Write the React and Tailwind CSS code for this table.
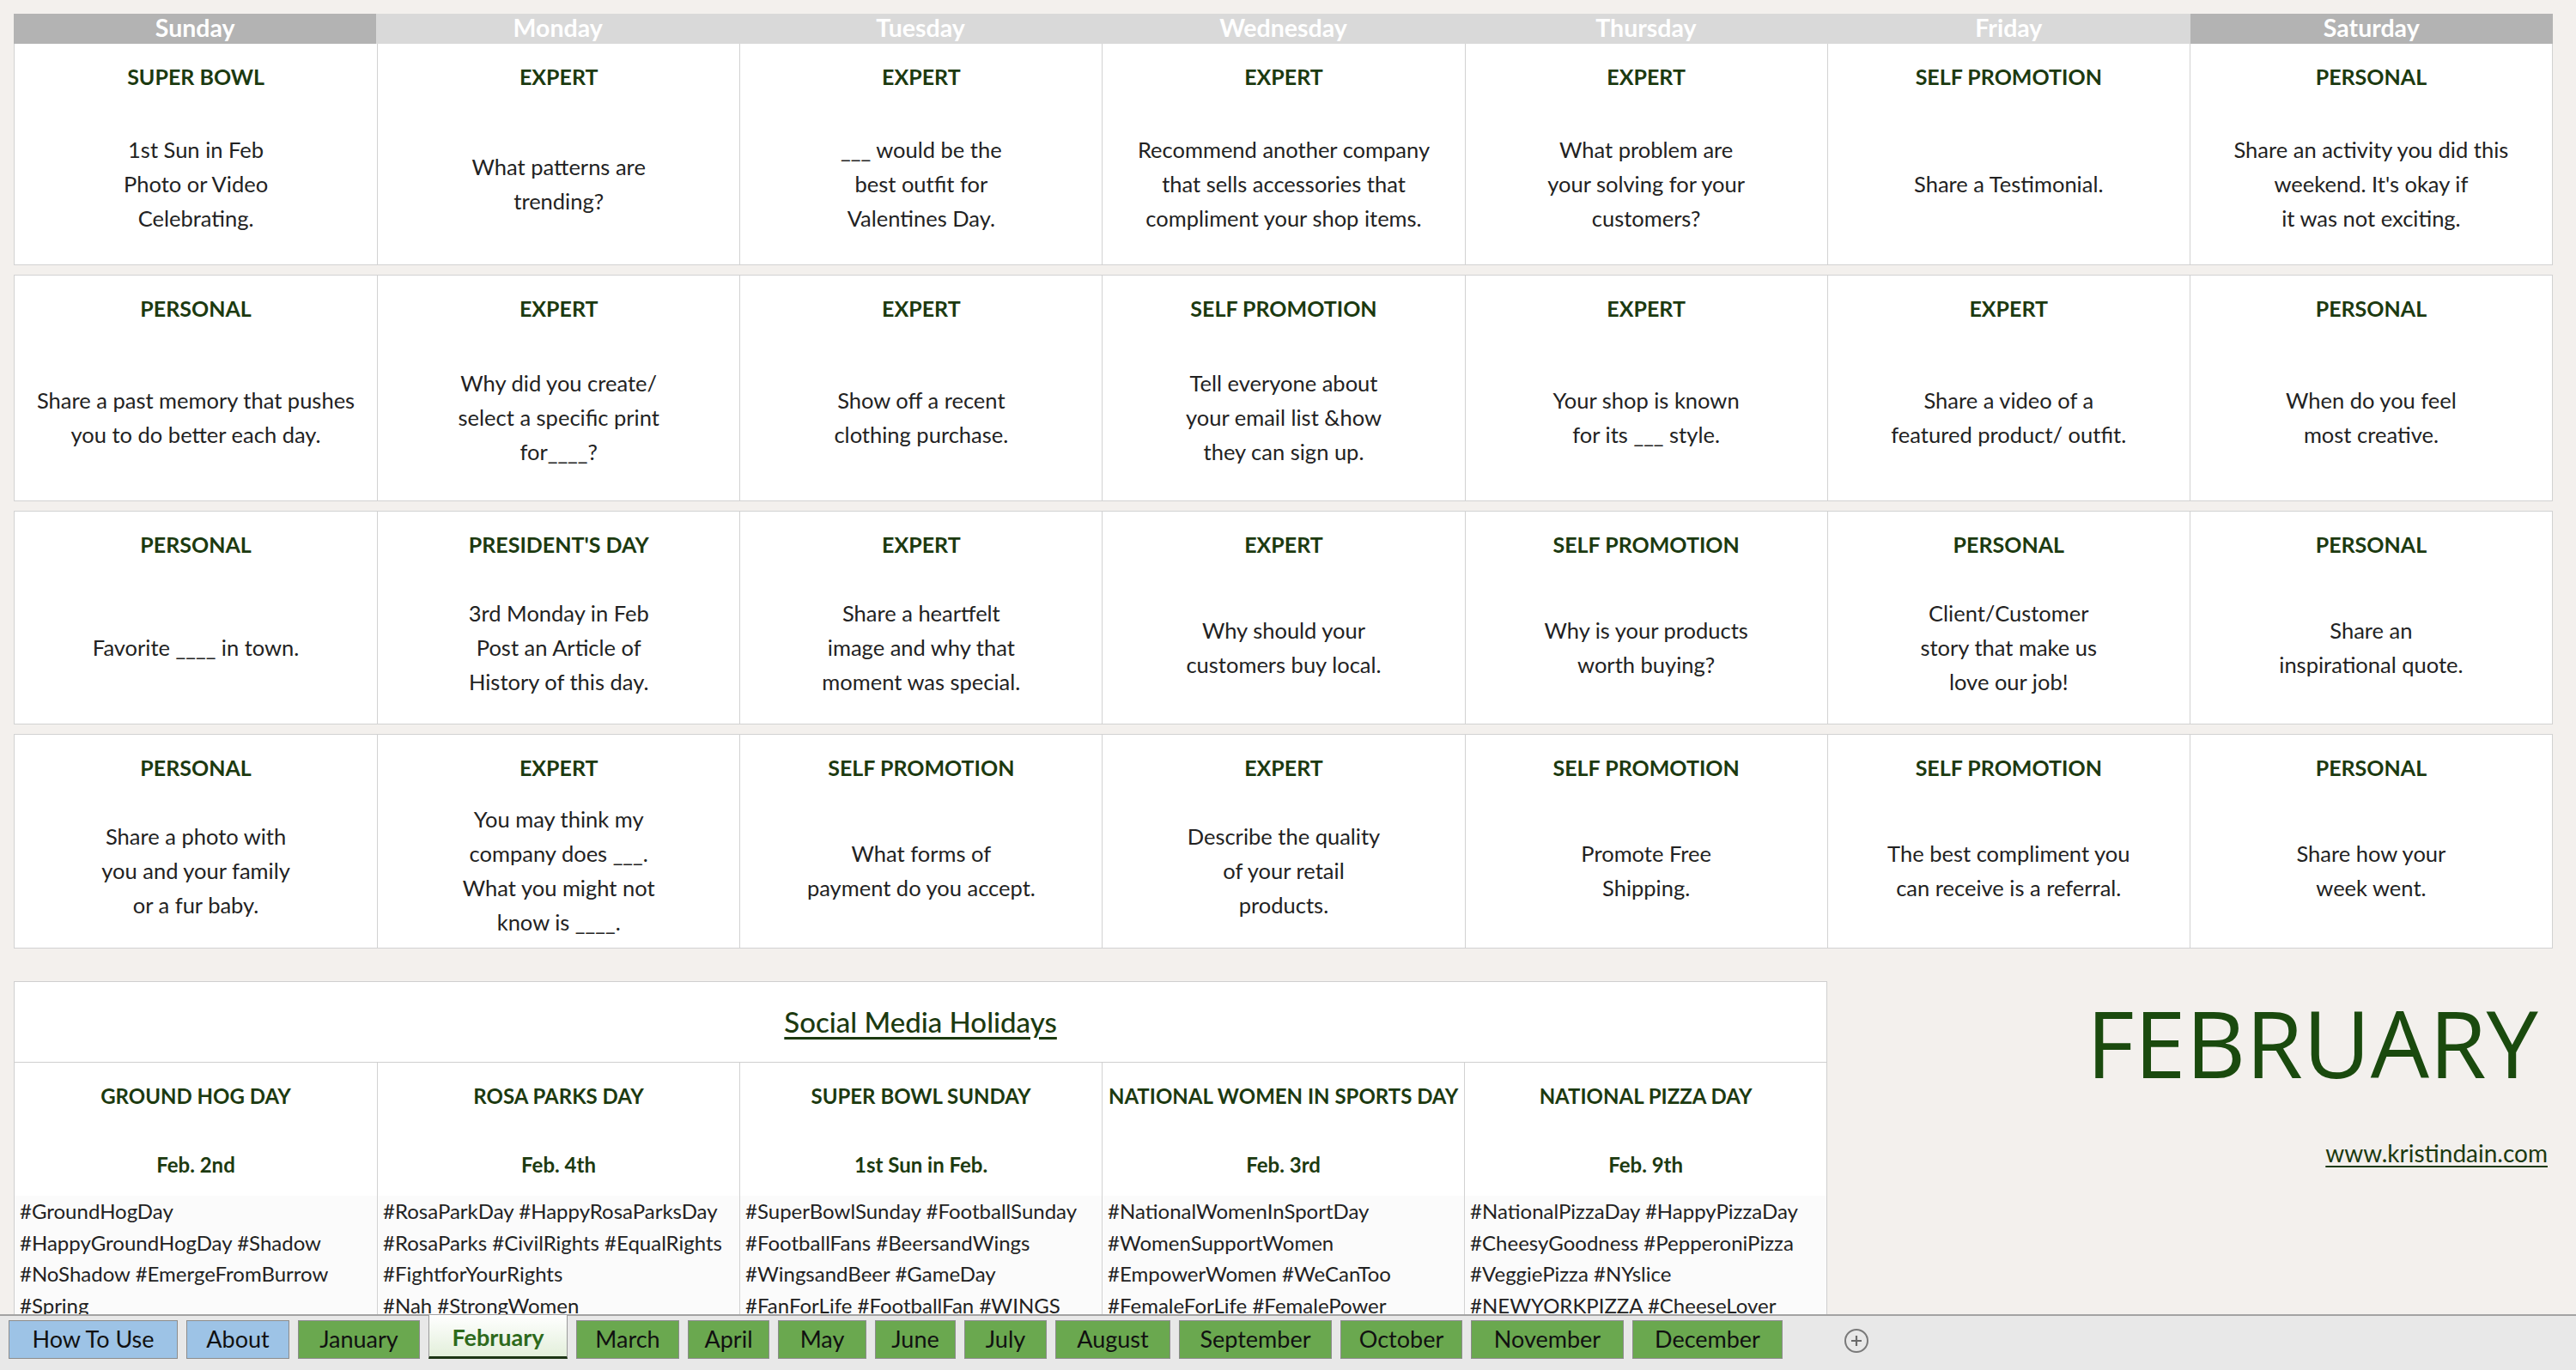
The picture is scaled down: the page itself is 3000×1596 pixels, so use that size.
import React from 'react'

const days = ['Sunday', 'Monday', 'Tuesday', 'Wednesday', 'Thursday', 'Friday', 'Saturday']

const weeks = [
  {
    h: 'h-[258px]',
    cells: [
      ['SUPER BOWL', '1st Sun in Feb\nPhoto or Video\nCelebrating.'],
      ['EXPERT', 'What patterns are\ntrending?'],
      ['EXPERT', '___ would be the\nbest outfit for\nValentines Day.'],
      ['EXPERT', 'Recommend another company\nthat sells accessories that\ncompliment your shop items.'],
      ['EXPERT', 'What problem are\nyour solving for your\ncustomers?'],
      ['SELF PROMOTION', 'Share a Testimonial.'],
      ['PERSONAL', "Share an activity you did this\nweekend. It's okay if\nit was not exciting."],
    ],
  },
  {
    h: 'h-[264px]',
    cells: [
      ['PERSONAL', 'Share a past memory that pushes\nyou to do better each day.'],
      ['EXPERT', 'Why did you create/\nselect a specific print\nfor____?'],
      ['EXPERT', 'Show off a recent\nclothing purchase.'],
      ['SELF PROMOTION', 'Tell everyone about\nyour email list &how\nthey can sign up.'],
      ['EXPERT', 'Your shop is known\nfor its ___ style.'],
      ['EXPERT', 'Share a video of a\nfeatured product/ outfit.'],
      ['PERSONAL', 'When do you feel\nmost creative.'],
    ],
  },
  {
    h: 'h-[249px]',
    cells: [
      ['PERSONAL', 'Favorite ____ in town.'],
      ["PRESIDENT'S DAY", '3rd Monday in Feb\nPost an Article of\nHistory of this day.'],
      ['EXPERT', 'Share a heartfelt\nimage and why that\nmoment was special.'],
      ['EXPERT', 'Why should your\ncustomers buy local.'],
      ['SELF PROMOTION', 'Why is your products\nworth buying?'],
      ['PERSONAL', 'Client/Customer\nstory that make us\nlove our job!'],
      ['PERSONAL', 'Share an\ninspirational quote.'],
    ],
  },
  {
    h: 'h-[250px]',
    cells: [
      ['PERSONAL', 'Share a photo with\nyou and your family\nor a fur baby.'],
      ['EXPERT', 'You may think my\ncompany does ___.\nWhat you might not\nknow is ____.'],
      ['SELF PROMOTION', 'What forms of\npayment do you accept.'],
      ['EXPERT', 'Describe the quality\nof your retail\nproducts.'],
      ['SELF PROMOTION', 'Promote Free\nShipping.'],
      ['SELF PROMOTION', 'The best compliment you\ncan receive is a referral.'],
      ['PERSONAL', 'Share how your\nweek went.'],
    ],
  },
]

const holidays = [
  {
    title: 'GROUND HOG DAY',
    date: 'Feb. 2nd',
    tags: ['#GroundHogDay', '#HappyGroundHogDay #Shadow', '#NoShadow #EmergeFromBurrow', '#Spring'],
  },
  {
    title: 'ROSA PARKS DAY',
    date: 'Feb. 4th',
    tags: ['#RosaParkDay #HappyRosaParksDay', '#RosaParks #CivilRights #EqualRights', '#FightforYourRights', '#Nah #StrongWomen'],
  },
  {
    title: 'SUPER BOWL SUNDAY',
    date: '1st Sun in Feb.',
    tags: ['#SuperBowlSunday #FootballSunday', '#FootballFans #BeersandWings', '#WingsandBeer #GameDay', '#FanForLife #FootballFan #WINGS'],
  },
  {
    title: 'NATIONAL WOMEN IN SPORTS DAY',
    date: 'Feb. 3rd',
    tags: ['#NationalWomenInSportDay', '#WomenSupportWomen', '#EmpowerWomen #WeCanToo', '#FemaleForLife #FemalePower'],
  },
  {
    title: 'NATIONAL PIZZA DAY',
    date: 'Feb. 9th',
    tags: ['#NationalPizzaDay #HappyPizzaDay', '#CheesyGoodness #PepperoniPizza', '#VeggiePizza #NYslice', '#NEWYORKPIZZA #CheeseLover'],
  },
]

const tabs = [
  { name: 'How To Use', w: 'w-[197px]', kind: 'blue' },
  { name: 'About', w: 'w-[120px]', kind: 'blue' },
  { name: 'January', w: 'w-[142px]', kind: 'green' },
  { name: 'February', w: 'w-[162px]', kind: 'active' },
  { name: 'March', w: 'w-[120px]', kind: 'green' },
  { name: 'April', w: 'w-[95px]', kind: 'green' },
  { name: 'May', w: 'w-[103px]', kind: 'green' },
  { name: 'June', w: 'w-[94px]', kind: 'green' },
  { name: 'July', w: 'w-[96px]', kind: 'green' },
  { name: 'August', w: 'w-[134px]', kind: 'green' },
  { name: 'September', w: 'w-[178px]', kind: 'green' },
  { name: 'October', w: 'w-[142px]', kind: 'green' },
  { name: 'November', w: 'w-[178px]', kind: 'green' },
  { name: 'December', w: 'w-[175px]', kind: 'green' },
]

function Lines({ text }) {
  return text.split('\n').map((line, i) => <div key={i}>{line}</div>)
}

function DayCell({ title, body, first }) {
  return (
    <div className={`flex flex-col items-center text-center ${first ? '' : 'border-l border-[#d2d2d2]'}`}>
      <div className="pt-[23px] text-[25px] leading-[30px] font-bold text-[#1c3a10]">{title}</div>
      <div className="flex flex-1 items-center justify-center pt-[15px] text-[25.5px] leading-[40px] text-[#222]">
        <div>
          <Lines text={body} />
        </div>
      </div>
    </div>
  )
}

function Tab({ tab }) {
  if (tab.kind === 'active') {
    return (
      <div className={`${tab.w} -mt-[6px] flex h-[51px] items-center justify-center border-x border-[#9a9a9a] border-b-[3px] border-b-[#1d3515] bg-gradient-to-b from-white to-[#e3efdb] pt-[4px] text-[27px] font-bold text-[#2e6a1c]`}>
        {tab.name}
      </div>
    )
  }
  const bg = tab.kind === 'blue' ? 'bg-[#9dc3e6]' : 'bg-[#6aa84f]'
  return (
    <div className={`${tab.w} ${bg} flex h-[45px] items-center justify-center border border-[#8c8c8c] text-[27px] text-[#111]`}>
      {tab.name}
    </div>
  )
}

export default function App() {
  return (
    <div className="flex h-[1596px] w-[3000px] flex-col overflow-hidden bg-[#f3f0ed] font-['Lato','Noto_Sans',sans-serif]">
      <div className="h-[1531px] overflow-hidden pl-[16px] pr-[27px] pt-[16px]">
        {/* Week day header */}
        <div className="grid h-[35px] grid-cols-7">
          {days.map((d, i) => (
            <div
              key={d}
              className={`flex items-center justify-center pb-[3px] text-[28.5px] font-bold leading-none text-white ${i === 0 || i === 6 ? 'bg-[#b3b3b3]' : 'bg-[#d9d9d9]'}`}
            >
              {d}
            </div>
          ))}
        </div>

        {/* Calendar weeks */}
        {weeks.map((week, wi) => (
          <div
            key={wi}
            className={`grid grid-cols-7 border border-[#d2d2d2] bg-white ${week.h} ${wi === 0 ? 'border-t-0' : 'mt-[11px]'}`}
          >
            {week.cells.map(([title, body], ci) => (
              <DayCell key={ci} title={title} body={body} first={ci === 0} />
            ))}
          </div>
        ))}

        {/* Holidays + month title */}
        <div className="mt-[38px] grid grid-cols-7">
          <div className="col-span-5 h-[420px] border border-[#cfcfcf] bg-white">
            <div className="flex h-[94px] items-center justify-center border-b border-[#cfcfcf] text-[33px] font-medium text-[#1c3a10] underline underline-offset-[5px]">
              Social Media Holidays
            </div>
            <div className="grid grid-cols-5">
              {holidays.map((h, i) => (
                <div key={h.title} className={`h-[330px] ${i === 0 ? '' : 'border-l border-[#d2d2d2]'}`}>
                  <div className="pt-[24px] text-center text-[24px] font-bold leading-[30px] text-[#1c3a10] whitespace-nowrap">
                    {h.title}
                  </div>
                  <div className="mt-[50px] text-center text-[24px] font-bold leading-[30px] text-[#1c3a10]">{h.date}</div>
                  <div className="mt-[21px] bg-[#fbfbfb] pl-[6px] text-[24px] leading-[36.5px] text-[#222] whitespace-nowrap">
                    {h.tags.map((t) => (
                      <div key={t}>{t}</div>
                    ))}
                  </div>
                </div>
              ))}
            </div>
          </div>
          <div className="col-span-2 flex flex-col items-end">
            <div className="mr-[17px] mt-[20px] font-['Open_Sans',sans-serif] text-[108px] font-normal leading-[104px] text-[#1a4a0e]">
              FEBRUARY
            </div>
            <div className="mr-[6px] mt-[59px] text-[28px] leading-[34px] text-[#1c3a10] underline underline-offset-[4px]">
              www.kristindain.com
            </div>
          </div>
        </div>
      </div>

      {/* Sheet tabs */}
      <div className="flex h-[65px] items-start gap-[10px] border-t-2 border-[#a3a3a3] bg-[#e8e8e8] pl-[10px] pt-[5px]">
        {tabs.map((t) => (
          <Tab key={t.name} tab={t} />
        ))}
        <div className="ml-[62px] mt-[10px] flex h-[28px] w-[28px] items-center justify-center rounded-full border-2 border-[#7a7a7a]">
          <svg width="16" height="16" viewBox="0 0 16 16" fill="none" stroke="#6a6a6a" strokeWidth="2.2">
            <path d="M8 2v12M2 8h12" />
          </svg>
        </div>
      </div>
    </div>
  )
}
